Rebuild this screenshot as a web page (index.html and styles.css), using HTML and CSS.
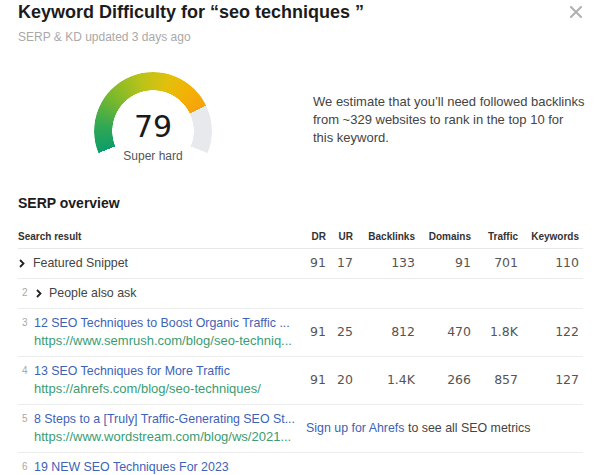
FILE: index.html
```html
<!DOCTYPE html>
<html lang="en">
<head>
<meta charset="utf-8">
<title>Keyword Difficulty</title>
<link rel="stylesheet" href="styles.css">
</head>
<body>
<div class="panel">
  <svg class="close" width="12" height="12" viewBox="0 0 12 12" aria-label="Close"><path d="M1 1 L11 11 M11 1 L1 11" stroke="#b0b0b0" stroke-width="2" stroke-linecap="square" fill="none"/></svg>
  <h1 class="title">Keyword Difficulty for “seo techniques ”</h1>
  <div class="updated">SERP &amp; KD updated 3 days ago</div>

  <div class="kd">
    <div class="gauge">
      <div class="ring"></div>
      <div class="gauge-label">
        <div class="score">79</div>
        <div class="level">Super hard</div>
      </div>
    </div>
    <p class="estimate">We estimate that you’ll need followed backlinks<br>from ~329 websites to rank in the top 10 for<br>this keyword.</p>
  </div>

  <h2 class="section">SERP overview</h2>
  <table class="serp">
    <colgroup>
      <col class="c-res"><col class="c-dr"><col class="c-ur"><col class="c-bl"><col class="c-dom"><col class="c-tr"><col class="c-kw">
    </colgroup>
    <thead>
      <tr><th class="left">Search result</th><th>DR</th><th>UR</th><th>Backlinks</th><th>Domains</th><th>Traffic</th><th class="last">Keywords</th></tr>
    </thead>
    <tbody>
      <tr>
        <td><div class="res"><svg class="chev first" width="8" height="18" viewBox="0 0 8 18"><path d="M2 6 L5.5 9.5 L2 13" stroke="#222" stroke-width="1.8" fill="none"/></svg><span class="plain">Featured Snippet</span></div></td>
        <td class="n">91</td><td class="n">17</td><td class="n">133</td><td class="n">91</td><td class="n">701</td><td class="n last">110</td>
      </tr>
      <tr>
        <td><div class="res"><span class="num">2</span><svg class="chev" width="8" height="18" viewBox="0 0 8 18"><path d="M2 6 L5.5 9.5 L2 13" stroke="#222" stroke-width="1.8" fill="none"/></svg><span class="plain">People also ask</span></div></td>
        <td></td><td></td><td></td><td></td><td></td><td class="last"></td>
      </tr>
      <tr>
        <td><div class="res"><span class="num">3</span><div class="lines"><div class="t">12 SEO Techniques to Boost Organic Traffic ...</div><div class="u">https://www.semrush.com/blog/seo-techniq...</div></div></div></td>
        <td class="n">91</td><td class="n">25</td><td class="n">812</td><td class="n">470</td><td class="n">1.8K</td><td class="n last">122</td>
      </tr>
      <tr>
        <td><div class="res"><span class="num">4</span><div class="lines"><div class="t">13 SEO Techniques for More Traffic</div><div class="u">https://ahrefs.com/blog/seo-techniques/</div></div></div></td>
        <td class="n">91</td><td class="n">20</td><td class="n">1.4K</td><td class="n">266</td><td class="n">857</td><td class="n last">127</td>
      </tr>
      <tr>
        <td><div class="res"><span class="num">5</span><div class="lines"><div class="t">8 Steps to a [Truly] Traffic-Generating SEO St...</div><div class="u">https://www.wordstream.com/blog/ws/2021...</div></div></div></td>
        <td colspan="6" class="signup"><a class="link">Sign up for Ahrefs</a> to see all SEO metrics</td>
      </tr>
      <tr class="lastrow">
        <td><div class="res"><span class="num">6</span><div class="lines"><div class="t">19 NEW SEO Techniques For 2023</div></div></div></td>
        <td></td><td></td><td></td><td></td><td></td><td class="last"></td>
      </tr>
    </tbody>
  </table>
</div>
</body>
</html>
```

FILE: styles.css
```css
html, body {
  margin: 0;
  padding: 0;
  background: #ffffff;
}
body {
  width: 600px;
  height: 475px;
  overflow: hidden;
  font-family: "Liberation Sans", Arial, sans-serif;
  color: #444;
}
.panel {
  position: relative;
  padding: 0 17px 0 18px;
}
.close {
  position: absolute;
  top: 6px;
  left: 570px;
}
.title {
  margin: 0;
  font-size: 18px;
  line-height: 24px;
  font-weight: 700;
  color: #1c1c1c;
}
.updated {
  margin-top: 5px;
  font-size: 12px;
  line-height: 16px;
  color: #a9a9a9;
}
.kd {
  display: flex;
  align-items: flex-start;
  margin-top: 27px;
  margin-bottom: 4px;
}
.gauge {
  position: relative;
  width: 118px;
  height: 118px;
  margin-left: 76px;
  flex: none;
}
.ring {
  width: 118px;
  height: 118px;
  border-radius: 50%;
  background: conic-gradient(from 248deg,
    #0d9d69 0deg,
    #32a853 28deg,
    #7cb82c 62deg,
    #b8c31a 98deg,
    #e2c00b 128deg,
    #f4b006 155deg,
    #f6a30d 176.4deg,
    #e7e9ec 176.4deg,
    #e7e9ec 224deg,
    transparent 224deg);
  -webkit-mask-image: radial-gradient(circle closest-side, transparent 40.5px, #000 41px);
  mask-image: radial-gradient(circle closest-side, transparent 40.5px, #000 41px);
}
.gauge-label {
  position: absolute;
  left: 0;
  top: 40px;
  width: 118px;
  text-align: center;
}
.score {
  font-family: "DejaVu Sans", sans-serif;
  font-size: 30px;
  line-height: 30px;
  color: #1a1a1a;
}
.level {
  margin-top: 7px;
  font-size: 12px;
  line-height: 14px;
  color: #555;
}
.estimate {
  margin: 21px 0 0 101px;
  font-size: 13px;
  line-height: 18px;
  color: #444;
  white-space: nowrap;
}
.section {
  margin: 0 0 18px;
  font-size: 14px;
  line-height: 18px;
  font-weight: 700;
  color: #1c1c1c;
}
.serp {
  width: 565px;
  border-collapse: collapse;
  table-layout: fixed;
}
.c-res { width: 282px; }
.c-dr { width: 26px; }
.c-ur { width: 27px; }
.c-bl { width: 62px; }
.c-dom { width: 56px; }
.c-tr { width: 47px; }
.c-kw { width: 65px; }
.serp th {
  padding: 0 0 4px;
  font-size: 10px;
  line-height: 14px;
  font-weight: 700;
  color: #333;
  text-align: right;
  border-bottom: 1px solid #e8e8e8;
  white-space: nowrap;
}
.serp th.left { text-align: left; }
.serp th.last, .serp td.last { padding-right: 4px; }
.serp td {
  padding: 5px 0 6px;
  font-size: 12.4px;
  line-height: 18px;
  border-bottom: 1px solid #ececec;
  vertical-align: middle;
}
.serp tr.lastrow td { border-bottom: none; }
.serp td.n {
  text-align: right;
  font-family: "DejaVu Sans", sans-serif;
  font-size: 12.5px;
  color: #555;
}
.res {
  display: flex;
  align-items: flex-start;
  min-width: 0;
}
.num {
  flex: none;
  width: 16px;
  padding-left: 4px;
  box-sizing: border-box;
  font-size: 10px;
  line-height: 18px;
  color: #a8a8a8;
}
.chev {
  flex: none;
  display: block;
}
.chev.first { margin-right: 7px; }
.num + .chev { margin-left: 1px; margin-right: 6px; }
.plain { color: #444; white-space: nowrap; }
.lines {
  flex: 1;
  min-width: 0;
}
.t, .u {
  white-space: nowrap;
  overflow: hidden;
  text-overflow: ellipsis;
}
.t { color: #3d63b6; font-size: 12.4px; }
.u { color: #3b9c72; font-size: 13px; }
.signup {
  padding-left: 6px !important;
  color: #444;
  white-space: nowrap;
}
.link { color: #3d63b6; }
```
